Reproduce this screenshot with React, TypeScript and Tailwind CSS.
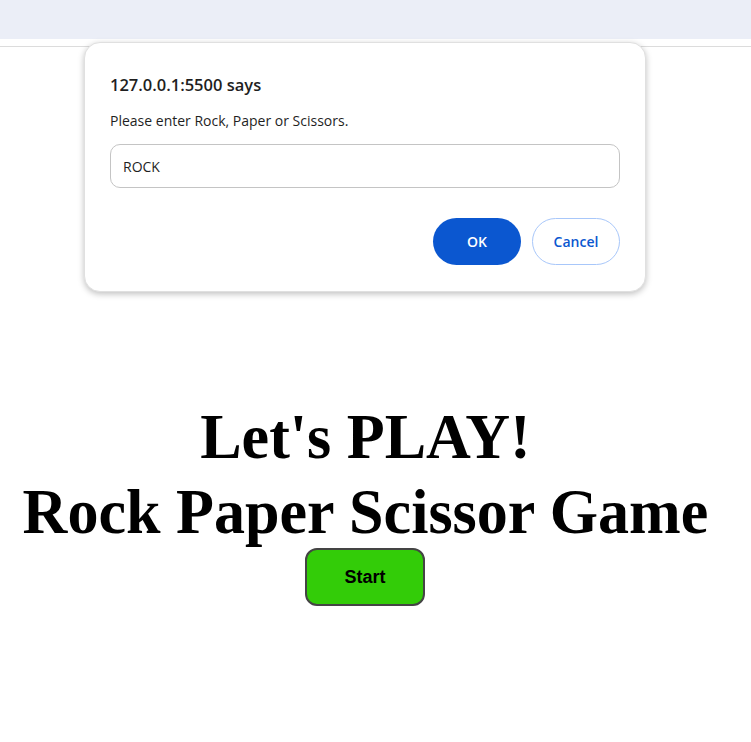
export default function App() {
  return (
    <div className="relative min-h-[742px] bg-white">
      <div className="h-[39px] bg-[#ebeef7]" />
      <div className="h-[7px]" />
      <div className="h-px bg-[#dcdcdc]" />

      <main className="flex w-[730px] flex-col items-center pt-[352px] font-['Liberation_Serif',serif] text-black">
        <h1 className="origin-center scale-x-[0.97] text-center text-[64px] font-bold leading-[75px] whitespace-nowrap">
          Let's PLAY!
          <br />
          Rock Paper Scissor Game
        </h1>
        <button className="-mt-[1px] h-[58px] w-[120px] rounded-[12px] border-2 border-[#444] bg-[#33cc08] font-['Liberation_Sans',sans-serif] text-[18px] font-bold text-black">
          Start
        </button>
      </main>

      <div className="absolute left-[84px] top-[42px] w-[562px] rounded-[16px] border border-[#e0e0e0] bg-white px-[25px] pb-[26px] pt-[28px] font-['Open_Sans',sans-serif] text-[#1f1f1f] shadow-[0_2px_6px_rgba(0,0,0,0.25)]">
        <div className="text-[16.5px] font-semibold leading-[28px]">127.0.0.1:5500 says</div>
        <div className="mt-[12px] text-[14px] leading-[20px]">Please enter Rock, Paper or Scissors.</div>
        <div className="mt-[13px] flex h-[44px] items-center rounded-[10px] border border-[#c4c4c4] px-[12px] text-[14px]">
          ROCK
        </div>
        <div className="mt-[30px] flex justify-end gap-[11px]">
          <button className="h-[47px] w-[88px] rounded-full bg-[#0b57d0] text-[14px] font-semibold text-white">OK</button>
          <button className="h-[47px] w-[88px] rounded-full border border-[#a8c7fa] bg-white text-[14px] font-semibold text-[#0b57d0]">
            Cancel
          </button>
        </div>
      </div>
    </div>
  );
}
